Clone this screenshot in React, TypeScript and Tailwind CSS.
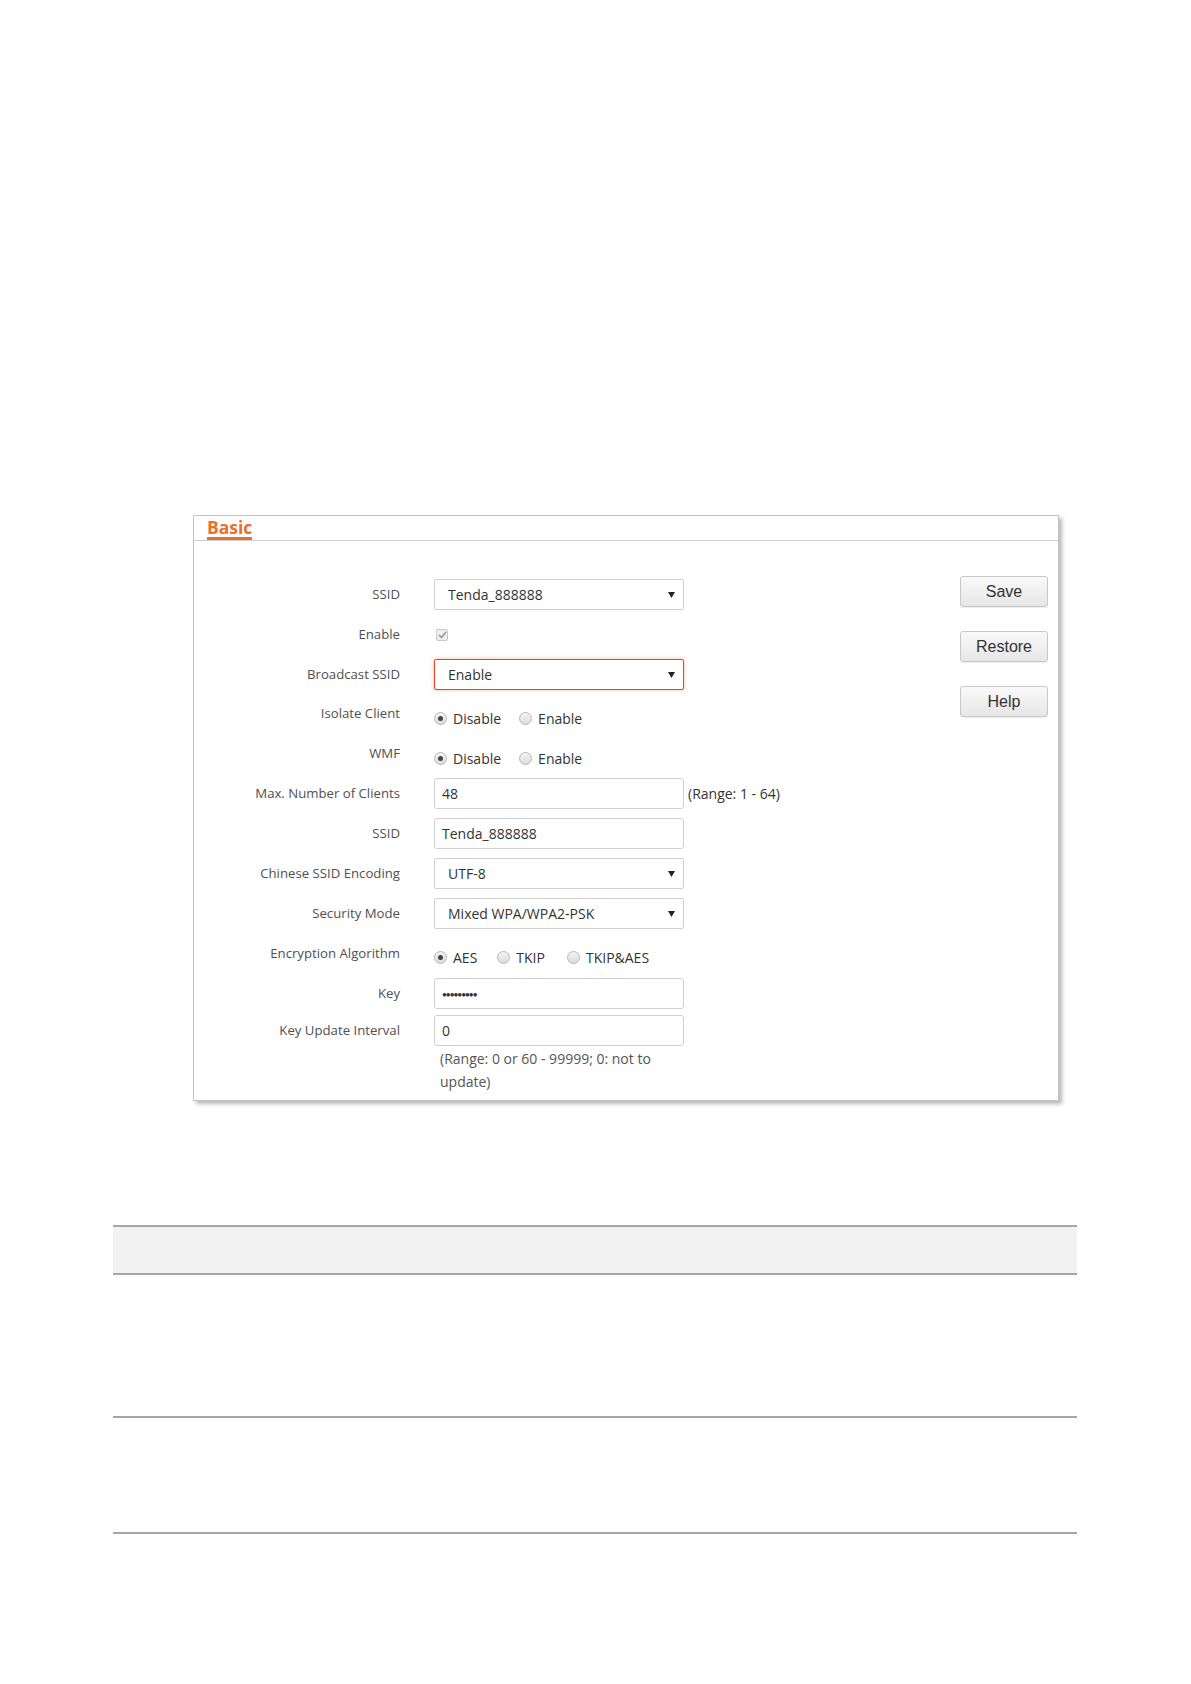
import React from "react";

const labelCls = "w-[206px] shrink-0 text-right text-[13.2px] text-[#505050]";
const ctrlText = "text-[14px] text-[#333]";

function Arrow() {
  return (
    <svg width="7" height="6" viewBox="0 0 7 6" className="absolute right-[8px] top-1/2 -translate-y-1/2">
      <path d="M0 0 L7 0 L3.5 6 Z" fill="#222" />
    </svg>
  );
}

function Select({ value, red }: { value: string; red?: boolean }) {
  return (
    <div
      className={
        "relative w-[250px] h-[31px] rounded-[2px] flex items-center pl-[13px] bg-white " +
        ctrlText +
        (red ? " border border-[#e8432f] shadow-[0_0_4px_rgba(240,150,80,0.6)]" : " border border-[#d0d0d0]")
      }
    >
      {value}
      <Arrow />
    </div>
  );
}

function Input({ value }: { value: string }) {
  return (
    <div className={"w-[250px] h-[31px] rounded-[3px] border border-[#d0d0d0] flex items-center pl-[7px] bg-white " + ctrlText}>
      {value}
    </div>
  );
}

function Radio({ checked }: { checked?: boolean }) {
  return (
    <span className="inline-flex w-[13px] h-[13px] rounded-full border border-[#b8b8b8] bg-gradient-to-b from-[#f4f4f4] to-[#dcdcdc] items-center justify-center shrink-0">
      {checked && <span className="w-[5px] h-[5px] rounded-full bg-[#444]" />}
    </span>
  );
}

function RadioGroup({ items, gaps }: { items: { label: string; checked?: boolean }[]; gaps: number[] }) {
  return (
    <div className="flex items-center">
      {items.map((it, i) => (
        <div key={it.label} className="flex items-center" style={{ marginLeft: i === 0 ? 0 : gaps[i - 1] }}>
          <Radio checked={it.checked} />
          <span className={"ml-[6px] " + ctrlText}>{it.label}</span>
        </div>
      ))}
    </div>
  );
}

function Btn({ children }: { children: React.ReactNode }) {
  return (
    <div className="w-[88px] h-[31px] rounded-[3px] border border-[#c8c8c8] bg-gradient-to-b from-[#fafafa] to-[#e6e6e6] flex items-center justify-center text-[16px] text-[#333] font-['Liberation_Sans',Arial,sans-serif] shadow-[0_1px_1px_rgba(0,0,0,0.08)]">
      {children}
    </div>
  );
}

function Row({ label, children, cls, labelCls2 }: { label?: string; children?: React.ReactNode; cls: string; labelCls2?: string }) {
  return (
    <div className={"flex items-center gap-[34px] " + cls}>
      <div className={labelCls + " " + (labelCls2 ?? "")}>{label}</div>
      {children}
    </div>
  );
}

export default function App() {
  return (
    <div className="w-[1191px] h-[1684px] bg-white font-['Open_Sans','Noto_Sans',sans-serif]">
      <div className="h-[515px]" />
      <div className="ml-[193px] w-[866px] h-[586px] border border-[#c4c4c4] shadow-[3px_3px_4px_rgba(0,0,0,0.28)] bg-white">
        <div className="h-[25px] border-b border-[#cfcfcf] pl-[13px] flex">
          <div className="relative text-[17.5px] font-bold text-[#e8702a] leading-[22px] h-[25px]">
            Basic
            <div className="absolute left-0 right-0 bottom-[1px] h-[3px] bg-[#e8702a]" />
          </div>
        </div>
        <div className="flex">
          <div className="flex flex-col pt-[38px]">
            <Row label="SSID" cls="h-[31px]">
              <Select value="Tenda_888888" />
            </Row>
            <Row label="Enable" cls="h-[49px]">
              <span className="w-[12px] h-[12px] ml-[2px] rounded-[2px] border border-[#c8c8c8] bg-[#eeeeee] flex items-center justify-center">
                <svg width="9" height="8" viewBox="0 0 9 8">
                  <path d="M1 4 L3.5 6.5 L8 1" stroke="#999" strokeWidth="1.6" fill="none" />
                </svg>
              </span>
            </Row>
            <Row label="Broadcast SSID" cls="h-[31px]">
              <Select value="Enable" red />
            </Row>
            <Row label="Isolate Client" cls="h-[40px] mt-[8px]" labelCls2="pb-[8px]">
              <RadioGroup items={[{ label: "Disable", checked: true }, { label: "Enable" }]} gaps={[18]} />
            </Row>
            <Row label="WMF" cls="h-[40px]" labelCls2="pb-[8px]">
              <RadioGroup items={[{ label: "Disable", checked: true }, { label: "Enable" }]} gaps={[18]} />
            </Row>
            <Row label="Max. Number of Clients" cls="h-[31px]">
              <div className="flex items-center">
                <Input value="48" />
                <span className={"ml-[4px] " + ctrlText}>(Range: 1 - 64)</span>
              </div>
            </Row>
            <Row label="SSID" cls="h-[31px] mt-[9px]">
              <Input value="Tenda_888888" />
            </Row>
            <Row label="Chinese SSID Encoding" cls="h-[31px] mt-[9px]">
              <Select value="UTF-8" />
            </Row>
            <Row label="Security Mode" cls="h-[31px] mt-[9px]">
              <Select value="Mixed WPA/WPA2-PSK" />
            </Row>
            <Row label="Encryption Algorithm" cls="h-[42px] mt-[7px]" labelCls2="pb-[7px]">
              <RadioGroup items={[{ label: "AES", checked: true }, { label: "TKIP" }, { label: "TKIP&AES" }]} gaps={[20, 22]} />
            </Row>
            <Row label="Key" cls="h-[31px]">
              <div className="w-[250px] h-[31px] rounded-[3px] border border-[#d0d0d0] flex items-center pl-[7px] bg-white text-[#333] text-[8px] tracking-[-1px]">
                ●●●●●●●●●
              </div>
            </Row>
            <Row label="Key Update Interval" cls="h-[31px] mt-[6px]">
              <Input value="0" />
            </Row>
            <div className="flex gap-[34px]">
              <div className="w-[206px] shrink-0" />
              <div className={"w-[250px] pl-[6px] leading-[23px] mt-[1px] " + ctrlText + " text-[#555]"}>
                (Range: 0 or 60 - 99999; 0: not to update)
              </div>
            </div>
          </div>
          <div className="ml-auto mr-[10px] pt-[35px] flex flex-col gap-[24px]">
            <Btn>Save</Btn>
            <Btn>Restore</Btn>
            <Btn>Help</Btn>
          </div>
        </div>
      </div>
      <div className="mt-[124px] ml-[113px] w-[964px]">
        <div className="h-[50px] bg-[#f2f2f2] border-t-2 border-b-2 border-[#a6a6a6]" />
        <div className="h-[143px] border-b-2 border-[#a6a6a6]" />
        <div className="h-[116px] border-b-2 border-[#a6a6a6]" />
      </div>
    </div>
  );
}
